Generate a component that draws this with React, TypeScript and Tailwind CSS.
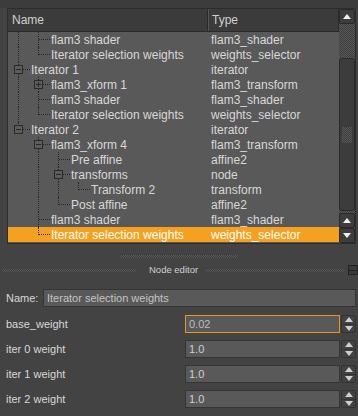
import React from "react";

type Row = {
    name: string;
    type: string;
    level: number;
    last: boolean;
    anc: boolean[];
    exp?: "minus" | "plus";
    sel?: boolean;
};

const rows: Row[] = [
    { name: "flam3 shader", type: "flam3_shader", level: 1, last: false, anc: [true] },
    { name: "Iterator selection weights", type: "weights_selector", level: 1, last: true, anc: [true] },
    { name: "Iterator 1", type: "iterator", level: 0, last: false, anc: [], exp: "minus" },
    { name: "flam3_xform 1", type: "flam3_transform", level: 1, last: false, anc: [true], exp: "plus" },
    { name: "flam3 shader", type: "flam3_shader", level: 1, last: false, anc: [true] },
    { name: "Iterator selection weights", type: "weights_selector", level: 1, last: true, anc: [true] },
    { name: "Iterator 2", type: "iterator", level: 0, last: true, anc: [], exp: "minus" },
    { name: "flam3_xform 4", type: "flam3_transform", level: 1, last: false, anc: [false], exp: "minus" },
    { name: "Pre affine", type: "affine2", level: 2, last: false, anc: [false, true] },
    { name: "transforms", type: "node", level: 2, last: false, anc: [false, true], exp: "minus" },
    { name: "Transform 2", type: "transform", level: 3, last: true, anc: [false, true, true] },
    { name: "Post affine", type: "affine2", level: 2, last: true, anc: [false, true] },
    { name: "flam3 shader", type: "flam3_shader", level: 1, last: false, anc: [false] },
    { name: "Iterator selection weights", type: "weights_selector", level: 1, last: true, anc: [false], sel: true },
];

const params = [
    { label: "base_weight", value: "0.02", focus: true },
    { label: "iter 0 weight", value: "1.0" },
    { label: "iter 1 weight", value: "1.0" },
    { label: "iter 2 weight", value: "1.0" },
];

function Tri({ down, color = "#f0f0f0" }: { down?: boolean; color?: string }) {
    return (
        <svg width="8" height="5" viewBox="0 0 8 5">
            {down ? <polygon points="0,0 8,0 4,5" fill={color} /> : <polygon points="0,5 8,5 4,0" fill={color} />}
        </svg>
    );
}

function Expander({ kind }: { kind: "minus" | "plus" }) {
    return (
        <span className="absolute left-[6px] top-[3px] w-[9px] h-[9px] border border-[#2a2a2a] bg-[#5c5c5c] flex items-center justify-center">
            <span className="w-[5px] h-px bg-[#2a2a2a]" />
            {kind === "plus" && <span className="absolute left-[3px] top-[1px] w-px h-[5px] bg-[#2a2a2a]" />}
        </span>
    );
}

function Guides({ row }: { row: Row }) {
    const cells = [];
    for (let k = 0; k <= row.level; k++) {
        if (k < row.level) {
            cells.push(
                <div key={k} className="relative w-5 h-full shrink-0">
                    {row.anc[k] && <span className="absolute left-[10px] top-0 bottom-0 border-l border-dotted border-[#262626]" />}
                </div>
            );
        } else {
            cells.push(
                <div key={k} className="relative w-5 h-full shrink-0">
                    <span className={row.last
                        ? "absolute left-[10px] top-0 h-[8px] border-l border-dotted border-[#262626]"
                        : "absolute left-[10px] top-0 bottom-0 border-l border-dotted border-[#262626]"} />
                    <span className="absolute left-[11px] right-[-2px] top-[7px] border-t border-dotted border-[#262626]" />
                    {row.exp && <Expander kind={row.exp} />}
                </div>
            );
        }
    }
    return <>{cells}</>;
}

function ScrollBtn({ down }: { down?: boolean }) {
    return (
        <div className="h-[15px] bg-[#3d3d3d] border border-[#2a2a2a] rounded-[2px] flex items-center justify-center">
            <Tri down={down} />
        </div>
    );
}

const checker = "bg-[image:repeating-conic-gradient(#585858_0_25%,#3e3e3e_0_50%)] bg-[length:2px_2px]";

export default function App() {
    return (
        <div className="w-[358px] h-[416px] bg-[#434343] overflow-hidden font-['Liberation_Sans',Arial,sans-serif] text-[#d8d8d8] flex flex-col">
            <div className="h-[8px] bg-[#3c3c3c] shrink-0" />

            {/* tree */}
            <div className="ml-[7px] w-[349px] h-[236px] border border-[#2c2c2c] flex shrink-0">
                <div className="flex-1 bg-[#595959] flex flex-col">
                    <div className="flex h-[23px] bg-[#3b3b3b] border-b border-[#2a2a2a] text-[12px] text-[#d0d0d0]">
                        <div className="w-[200px] pl-[4px] flex items-center border-r border-[#2a2a2a]">Name</div>
                        <div className="flex-1 pl-[3px] flex items-center border-l border-[#555] border-r border-r-[#2a2a2a]">Type</div>
                    </div>
                    {rows.map((r, i) => (
                        <div key={i} className={r.sel ? "flex h-[15px] bg-[#f4a11f] text-white text-[12px] leading-[16px]" : "flex h-[15px] text-[12px] leading-[16px]"}>
                            <div className="w-[200px] flex shrink-0">
                                <Guides row={r} />
                                <span className="pl-[3px] whitespace-nowrap">{r.name}</span>
                            </div>
                            <div className="pl-[3px] whitespace-nowrap">{r.type}</div>
                        </div>
                    ))}
                </div>
                <div className={`w-[16px] flex flex-col ${checker}`}>
                    <ScrollBtn />
                    <div className="h-[34px]" />
                    <div className="h-[153px] bg-[#3c3c3c] border border-[#2a2a2a] rounded-[3px] flex items-center justify-center">
                        <div className={`w-[10px] h-[16px] ${checker}`} />
                    </div>
                    <div className="h-[2px]" />
                    <ScrollBtn />
                    <ScrollBtn down />
                </div>
            </div>

            {/* splitter */}
            <div className="h-[19px] flex items-center justify-center shrink-0">
                <div className={`w-[118px] h-[3px] mt-[6px] ${checker}`} />
            </div>

            {/* dock title */}
            <div className="h-[14px] flex items-center shrink-0">
                <div className={`ml-[2px] w-[136px] h-[3px] ${checker}`} />
                <span className="ml-[12px] text-[9.5px] text-[#d0d0d0] whitespace-nowrap">Node editor</span>
                <div className={`ml-[7px] w-[140px] h-[3px] ${checker}`} />
                <div className="ml-[4px] w-[10px] h-[10px] border border-[#222] bg-[#3a3a3a] flex items-end">
                    <div className="w-full h-[4px] border-t border-[#222]" />
                </div>
            </div>

            {/* editor */}
            <div className="mt-[12px] flex items-center h-[18px] shrink-0">
                <span className="ml-[6px] w-[37px] text-[11px]">Name:</span>
                <div className="w-[313px] h-[18px] bg-[#595959] border border-[#353535] pl-[3px] text-[11px] text-[#c4c4c4] leading-[16px]">
                    Iterator selection weights
                </div>
            </div>

            <div className="mt-[8px] flex flex-col gap-[7px]">
                {params.map((p) => (
                    <div key={p.label} className="flex items-center h-[18px]">
                        <span className="ml-[6px] w-[179px] text-[11px] whitespace-nowrap">{p.label}</span>
                        <div className={p.focus
                            ? "w-[155px] h-[18px] bg-[#595959] border border-[#e8961e] pl-[3px] text-[11px] text-[#bdbdbd] leading-[16px]"
                            : "w-[155px] h-[18px] bg-[#595959] border border-[#353535] pl-[3px] text-[11px] text-[#cfcfcf] leading-[16px]"}>
                            {p.value}
                        </div>
                        <div className="w-[15px] h-[18px] ml-px flex flex-col bg-[#424242] border border-[#333] rounded-[2px]">
                            <div className="flex-1 flex items-center justify-center"><Tri color="#cfcfcf" /></div>
                            <div className="flex-1 flex items-center justify-center border-t border-[#333]"><Tri down color="#cfcfcf" /></div>
                        </div>
                    </div>
                ))}
            </div>
        </div>
    );
}
